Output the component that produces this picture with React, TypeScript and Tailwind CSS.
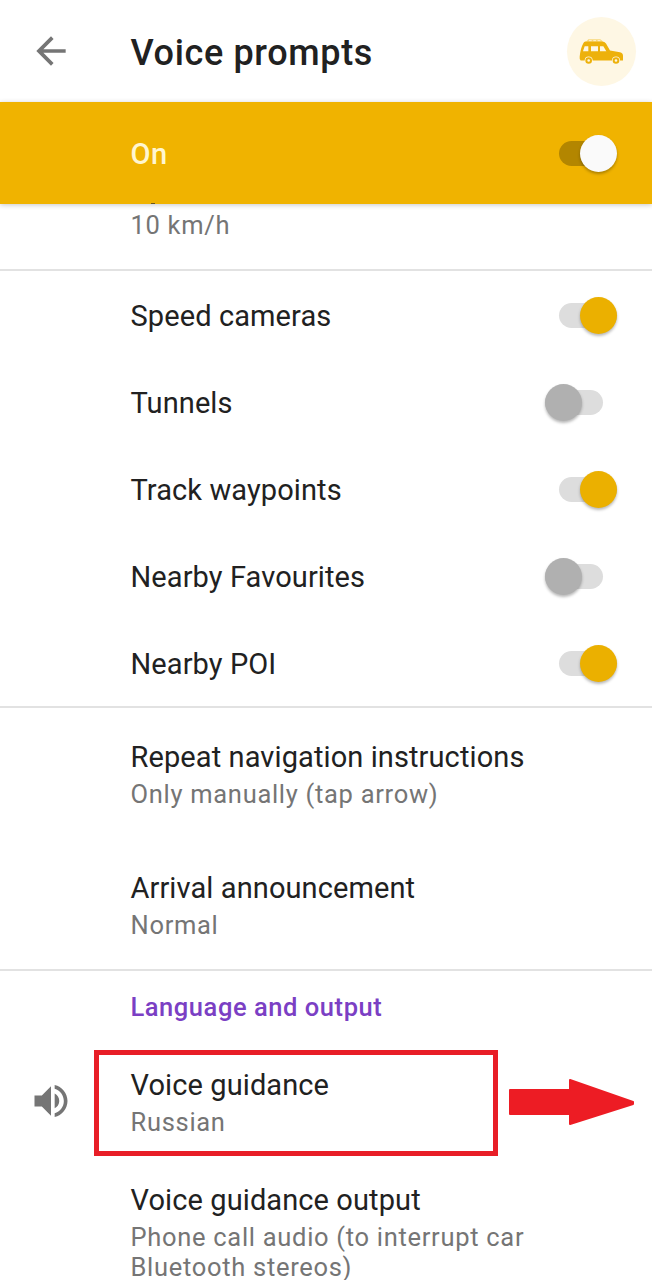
import React, { useState } from "react";

type SwitchTone = "accent" | "onAccent";

function Toggle({ on, tone = "accent", onToggle, label }: { on: boolean; tone?: SwitchTone; onToggle: () => void; label: string }) {
  const track = tone === "onAccent" ? "bg-[#b38600]" : "bg-[#dddddd]";
  const thumb = tone === "onAccent" ? "bg-[#fafafa]" : on ? "bg-[#ebb000]" : "bg-[#b0b0b0]";
  return (
    <button
      role="switch"
      aria-checked={on}
      aria-label={label}
      onClick={onToggle}
      className={`grid h-[37px] w-[58px] shrink-0 items-center ${on ? "mr-[35px]" : "mr-[49.5px]"}`}
    >
      <span className={`col-start-1 row-start-1 h-[25px] w-[58px] rounded-full ${track}`} />
      <span
        className={`col-start-1 row-start-1 size-[37px] rounded-full shadow-[0_2px_3px_rgba(0,0,0,0.28)] ${thumb} ${on ? "justify-self-end" : "justify-self-start"}`}
      />
    </button>
  );
}

function CarIcon() {
  return (
    <svg viewBox="117 114 135 80" className="h-[27px] w-[45px]">
      <path d="M138 125 L145 117 H181 L190 125 Z" fill="#f7d777" />
      <path d="M147 120h8v3h-8zM160 120h8v3h-8zM173 120h8v3h-8z" fill="#fff6df" />
      <path
        fillRule="evenodd"
        fill="#edb10b"
        d="M136 124 H186 Q194 124 198 130 L210 151 L240 156 Q249 158 249 167 V181 H240 A12 12 0 0 0 216 181 H158 A12 12 0 0 0 134 181 H122 Q118 179 119 170 Q121 145 130 129 Q132 124 136 124 Z M134 138 L129 153 H145 V138 Z M153 138 V153 H174 V138 Z M180 138 V153 H199 L190 138 Z"
      />
      <path fillRule="evenodd" fill="#edb10b" d="M146 171a10 10 0 1 1 0 20a10 10 0 1 1 0-20z M146 177a4 4 0 1 0 0 8a4 4 0 1 0 0-8z" />
      <path fillRule="evenodd" fill="#edb10b" d="M228 171a10 10 0 1 1 0 20a10 10 0 1 1 0-20z M228 177a4 4 0 1 0 0 8a4 4 0 1 0 0-8z" />
    </svg>
  );
}

function Title({ children }: { children: React.ReactNode }) {
  return <div className="text-[29px] leading-[37px] tracking-[0.1px] whitespace-nowrap text-[#212121]">{children}</div>;
}

function Subtitle({ children }: { children: React.ReactNode }) {
  return <div className="text-[25.5px] leading-[30px] tracking-[0.7px] text-[#757575]">{children}</div>;
}

function Entry({ title, children }: { title: string; children: React.ReactNode }) {
  return (
    <div className="flex flex-col gap-[3px]">
      <Title>{title}</Title>
      <Subtitle>{children}</Subtitle>
    </div>
  );
}

const initial = [
  { name: "Speed cameras", on: true },
  { name: "Tunnels", on: false },
  { name: "Track waypoints", on: true },
  { name: "Nearby Favourites", on: false },
  { name: "Nearby POI", on: true },
];

export default function App() {
  const [enabled, setEnabled] = useState(true);
  const [items, setItems] = useState(initial);

  return (
    <div className="flex h-[1280px] w-[652px] flex-col overflow-hidden bg-white font-['Roboto',sans-serif]">
      <header className="flex h-[102px] shrink-0 items-center pr-4">
        <button aria-label="Back" className="ml-[28.5px] w-[102px] text-[#757575]">
          <svg viewBox="0 0 24 24" className="size-[44px]" fill="currentColor">
            <path d="M20 11H7.83l5.59-5.59L12 4l-8 8 8 8 1.41-1.41L7.83 13H20v-2z" />
          </svg>
        </button>
        <h1 className="grow pt-[4px] text-[36px] leading-[48px] font-medium tracking-[0.65px] text-[#212121]">Voice prompts</h1>
        <div className="flex size-[69px] items-center justify-center rounded-full bg-[#fef7e4]">
          <CarIcon />
        </div>
      </header>

      <section className="z-10 flex h-[102px] shrink-0 items-center justify-between bg-[#f0b300] pl-[130.5px] shadow-[0_1px_5px_rgba(0,0,0,0.22)]">
        <span className="pt-[3px] text-[29px] font-medium tracking-[0.5px] text-[#fff6d0]">On</span>
        <Toggle label="Voice prompts" on={enabled} tone="onAccent" onToggle={() => setEnabled(!enabled)} />
      </section>

      <section className="z-10 h-[67px] shrink-0 border-b-2 border-[#e2e2e2] pl-[130.5px]">
        {/* Descender of the row scrolled beneath the bar */}
        <div className="-mt-px ml-[20px] h-px w-[4px] bg-[#6b5518]" />
        <div className="pt-[6px]">
          <Subtitle>10 km/h</Subtitle>
        </div>
      </section>

      <section className="flex h-[437px] shrink-0 flex-col border-b-2 border-[#e2e2e2] pt-px">
        {items.map((item, index) => (
          <div key={item.name} className="flex h-[87px] shrink-0 items-center justify-between pl-[130.5px]">
            <div className="pt-px">
              <Title>{item.name}</Title>
            </div>
            <Toggle
              label={item.name}
              on={item.on}
              onToggle={() => setItems(items.map((it, i) => (i === index ? { ...it, on: !it.on } : it)))}
            />
          </div>
        ))}
      </section>

      <section className="flex h-[263px] shrink-0 flex-col border-b-2 border-[#e2e2e2] pl-[130.5px]">
        <div className="h-[131px] pt-[31px]">
          <Entry title="Repeat navigation instructions">Only manually (tap arrow)</Entry>
        </div>
        <div className="pt-[30.5px]">
          <Entry title="Arrival announcement">Normal</Entry>
        </div>
      </section>

      <section className="flex shrink-0 flex-col">
        <h2 className="pt-[20px] pl-[130.5px] text-[25.5px] leading-[32px] font-medium tracking-[0.55px] text-[#7b3fc4]">Language and output</h2>
        <div className="mt-[27px] flex h-[106px] items-center">
          <svg viewBox="0 0 24 24" className="mb-[4px] ml-[28.5px] size-[44px] shrink-0 text-[#757575]" fill="currentColor">
            <path d="M3 9v6h4l5 5V4L7 9H3zm13.5 3c0-1.77-1.02-3.29-2.5-4.03v8.05c1.48-.73 2.5-2.25 2.5-4.02zM14 3.23v2.06c2.89.86 5 3.54 5 6.71s-2.11 5.85-5 6.71v2.06c4.01-.91 7-4.49 7-8.77s-2.99-7.86-7-8.77z" />
          </svg>
          <div className="ml-[21.5px] h-[106px] w-[404px] shrink-0 border-[5px] border-[#e81e27] pt-[12px] pl-[31.5px]">
            <Entry title="Voice guidance">Russian</Entry>
          </div>
          <svg viewBox="0 0 126 48" className="mb-[2px] ml-[11px] h-[48px] w-[126px] shrink-0">
            <path d="M1 12 H61 V2 L124 24 V26 L61 46 V36 H1 Z" fill="#ed1c24" stroke="#ed1c24" strokeWidth="2" strokeLinejoin="round" />
          </svg>
        </div>
        <div className="pt-[26px] pl-[130.5px]">
          <Entry title="Voice guidance output">
            Phone call audio (to interrupt car
            <br />
            Bluetooth stereos)
          </Entry>
        </div>
      </section>
    </div>
  );
}
